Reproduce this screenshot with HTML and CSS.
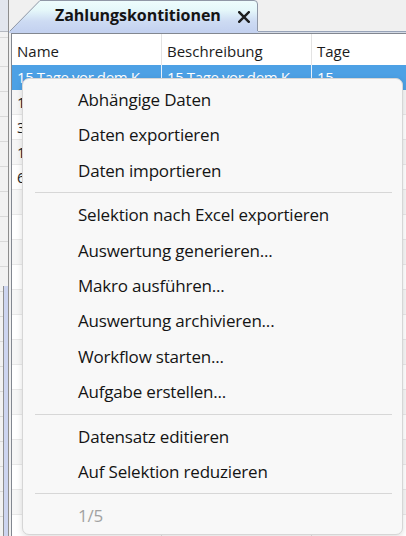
FILE: index.html
```html
<!DOCTYPE html>
<html lang="de">
<head>
<meta charset="utf-8">
<title>Zahlungskontitionen</title>
<link rel="stylesheet" href="styles.css">
</head>
<body>
<div class="app">
  <aside class="side">
    <div class="side-head"></div>
    <div class="side-body">
      <div class="side-fill"></div>
      <div class="side-splitter"></div>
    </div>
  </aside>

  <main class="main">
    <div class="tabs">
      <div class="tab">
        <svg class="tab-shape" width="249" height="31" viewBox="0 0 249 31" aria-hidden="true">
          <defs>
            <linearGradient id="tabFill" x1="0" y1="0" x2="0" y2="1">
              <stop offset="0" stop-color="#eefdfd"/>
              <stop offset="0.32" stop-color="#e5f7fa"/>
              <stop offset="0.68" stop-color="#cddbf3"/>
              <stop offset="1" stop-color="#c4d2f0"/>
            </linearGradient>
          </defs>
          <path d="M1 31 L31 0.5 L245 0.5 Q248.5 0.5 248.5 4 L248.5 31 Z" fill="url(#tabFill)"/>
          <path d="M1 31 L31 0.5 L245 0.5 Q248.5 0.5 248.5 4 L248.5 31" fill="none" stroke="#8f97a6" stroke-width="1"/>
        </svg>
        <span class="tab-title">Zahlungskontitionen</span>
        <svg class="tab-close" width="12" height="12" viewBox="0 0 12 12" aria-hidden="true">
          <path d="M1.2 1.2 L10.8 10.8 M10.8 1.2 L1.2 10.8" stroke="#1e1e1e" stroke-width="2.4" stroke-linecap="square"/>
        </svg>
      </div>
    </div>
    <div class="tab-line"></div>

    <div class="grid">
      <div class="row head">
        <div class="cell">Name</div>
        <div class="cell">Beschreibung</div>
        <div class="cell">Tage</div>
      </div>
      <div class="row selected">
        <div class="cell">15 Tage vor dem K</div>
        <div class="cell">15 Tage vor dem K</div>
        <div class="cell">15</div>
      </div>
      <div class="row alt"><div class="cell">1</div><div class="cell"></div><div class="cell"></div></div>
      <div class="row"><div class="cell">3</div><div class="cell"></div><div class="cell"></div></div>
      <div class="row alt"><div class="cell">1</div><div class="cell"></div><div class="cell"></div></div>
      <div class="row"><div class="cell">6</div><div class="cell"></div><div class="cell"></div></div>
      <div class="row alt"><div class="cell"></div><div class="cell"></div><div class="cell"></div></div>
      <div class="row"><div class="cell"></div><div class="cell"></div><div class="cell"></div></div>
      <div class="row alt"><div class="cell"></div><div class="cell"></div><div class="cell"></div></div>
      <div class="row"><div class="cell"></div><div class="cell"></div><div class="cell"></div></div>
      <div class="row alt"><div class="cell"></div><div class="cell"></div><div class="cell"></div></div>
      <div class="row"><div class="cell"></div><div class="cell"></div><div class="cell"></div></div>
      <div class="row alt"><div class="cell"></div><div class="cell"></div><div class="cell"></div></div>
      <div class="row"><div class="cell"></div><div class="cell"></div><div class="cell"></div></div>
      <div class="row alt"><div class="cell"></div><div class="cell"></div><div class="cell"></div></div>
      <div class="row"><div class="cell"></div><div class="cell"></div><div class="cell"></div></div>
      <div class="row alt"><div class="cell"></div><div class="cell"></div><div class="cell"></div></div>
      <div class="row"><div class="cell"></div><div class="cell"></div><div class="cell"></div></div>
      <div class="row alt"><div class="cell"></div><div class="cell"></div><div class="cell"></div></div>
      <div class="row"><div class="cell"></div><div class="cell"></div><div class="cell"></div></div>
    </div>
  </main>
</div>

<nav class="context-menu" role="menu">
  <div class="item">Abhängige Daten</div>
  <div class="item">Daten exportieren</div>
  <div class="item">Daten importieren</div>
  <div class="sep"></div>
  <div class="item">Selektion nach Excel exportieren</div>
  <div class="item">Auswertung generieren...</div>
  <div class="item">Makro ausführen...</div>
  <div class="item">Auswertung archivieren...</div>
  <div class="item">Workflow starten...</div>
  <div class="item">Aufgabe erstellen...</div>
  <div class="sep"></div>
  <div class="item">Datensatz editieren</div>
  <div class="item">Auf Selektion reduzieren</div>
  <div class="sep"></div>
  <div class="item disabled">1/5</div>
</nav>
</body>
</html>
```

FILE: styles.css
```css
html, body {
  margin: 0;
  padding: 0;
}

body {
  width: 406px;
  height: 536px;
  overflow: hidden;
  position: relative;
  background: #f0f0f0;
  font-family: "Open Sans", "Noto Sans", sans-serif;
  color: #1b1b1b;
}

.app {
  display: flex;
  height: 536px;
}

/* left docked panel */
.side {
  width: 8px;
  flex: none;
  border-right: 1px solid #8d8d8d;
  display: flex;
  flex-direction: column;
}

.side-head {
  height: 31px;
  background: #e2e6ee;
  border-bottom: 1px solid #b4b8c0;
  flex: none;
}

.side-body {
  flex: 1;
  display: flex;
  flex-direction: column;
  background: #f2f2f2 repeating-linear-gradient(to bottom, transparent 0 24px, #d9d9d9 24px 25px);
  background-position: 0 10px;
}

.side-fill {
  flex: 1;
}

.side-splitter {
  height: 250px;
  margin-left: 3px;
  border-left: 1px solid #8d8d8d;
  background: #cdd5f0;
}

/* document area */
.main {
  flex: 1;
  min-width: 0;
  display: flex;
  flex-direction: column;
}

.tabs {
  height: 31px;
  flex: none;
  display: flex;
  align-items: flex-end;
}

.tab {
  position: relative;
  width: 249px;
  height: 31px;
  display: flex;
  align-items: center;
}

.tab-shape {
  position: absolute;
  left: 0;
  top: 0;
}

.tab-title {
  position: relative;
  margin-left: 46px;
  font-size: 16px;
  font-weight: 700;
  line-height: 31px;
  color: #141414;
  letter-spacing: -0.05px;
}

.tab-close {
  position: relative;
  margin-left: auto;
  margin-right: 8px;
  margin-top: 2px;
}

.tab-line {
  height: 2px;
  flex: none;
  background:
    linear-gradient(90deg, #c4d2f0 0 249px, transparent 249px),
    linear-gradient(#97a3b8 0 1px, #d5dbe6 1px 2px);
}

/* data grid */
.grid {
  flex: 1;
  margin-left: 2px;
  border-left: 1px solid #828790;
  border-top: 1px solid #828790;
  background: #ffffff;
  overflow: hidden;
  font-size: 15px;
}

.row {
  display: flex;
  height: 25px;
  line-height: 25px;
  border-bottom: 1px solid #e8e8e8;
  box-sizing: border-box;
}

.row.alt {
  background: #f6f6f6;
}

.cell {
  width: 150px;
  flex: none;
  box-sizing: border-box;
  padding-left: 5px;
  border-right: 1px solid #e3e3e3;
  white-space: nowrap;
  overflow: hidden;
}

.row.head {
  height: 31px;
  line-height: 27px;
  padding-top: 4px;
  border-bottom: none;
  background: #ffffff;
}

.row.head .cell {
  margin-top: -4px;
  padding-top: 4px;
}

.row.selected {
  background: #4da1e5;
  color: #ffffff;
  border-bottom-color: #4da1e5;
  letter-spacing: -0.4px;
}

.row.selected .cell {
  border-right-color: #e9f2fb;
}

/* popup menu */
.context-menu {
  position: absolute;
  left: 22px;
  top: 78px;
  width: 381px;
  box-sizing: border-box;
  padding: 3px 0 0;
  background: #f8f8f8;
  border: 1px solid #d6d6d6;
  border-radius: 7px;
  box-shadow: 0 2px 6px rgba(0, 0, 0, 0.13);
  display: flex;
  flex-direction: column;
  font-size: 17px;
  letter-spacing: -0.2px;
}

.item {
  height: 35.4px;
  line-height: 35.4px;
  padding-left: 55px;
  color: #141414;
  white-space: nowrap;
}

.item.disabled {
  color: #a2a2a2;
}

.sep {
  height: 1px;
  margin: 4px 10px 4px 12px;
  background: #d7d7d7;
}
```
